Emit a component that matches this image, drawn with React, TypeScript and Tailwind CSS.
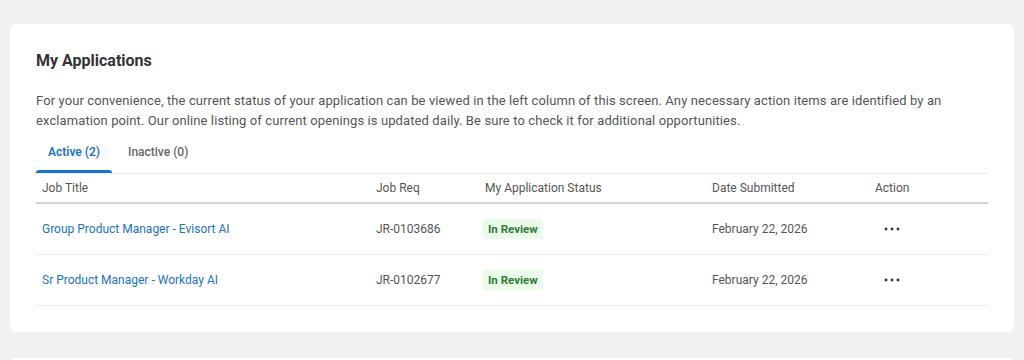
const rows = [
  { title: 'Group Product Manager - Evisort AI', req: 'JR-0103686', status: 'In Review', date: 'February 22, 2026' },
  { title: 'Sr Product Manager - Workday AI', req: 'JR-0102677', status: 'In Review', date: 'February 22, 2026' },
]

const cols = 'grid grid-cols-[334px_109px_227px_163px_119px]'

const Dots = () => (
  <svg width="16" height="6" viewBox="0 0 16 6" className="ml-[9px]">
    <circle cx="2" cy="3" r="1.45" fill="#333" />
    <circle cx="8" cy="3" r="1.45" fill="#333" />
    <circle cx="14" cy="3" r="1.45" fill="#333" />
  </svg>
)

const App = () => {
  return (
    <div className="h-[360px] overflow-hidden bg-[#f0f1f2] px-[10px] pt-[24px] font-['Roboto',sans-serif]">
      <div className="rounded-[6px] bg-white px-[26px] pt-[25px] pb-[26px]">
        <h2 className="text-[16px] leading-[24px] font-bold text-[#333]">My Applications</h2>

        <p className="mt-[18px] text-[13px] leading-[20px] tracking-[0.1px] text-[#555]">
          For your convenience, the current status of your application can be viewed in the left column of this screen. Any necessary action items are identified by an exclamation point. Our online listing of current openings is updated daily. Be sure to check it for additional opportunities.
        </p>

        <div className="flex border-b border-[#eaeaea]">
          <button className="flex w-[76px] flex-col items-center">
            <span className="pt-[13px] pb-[10px] text-[12px] leading-[16px] font-semibold text-[#1a73c8]">Active (2)</span>
            <span className="h-[3px] w-full rounded-t-[3px] bg-[#1a73c8]" />
          </button>
          <button className="flex flex-col items-center px-[16px]">
            <span className="pt-[13px] pb-[10px] text-[12px] leading-[16px] font-medium text-[#666]">Inactive (0)</span>
          </button>
        </div>

        <div className={`${cols} h-[30px] items-center border-b-2 border-[#d4d4d4] text-[12px] text-[#555]`}>
          <div className="pl-[6px]">Job Title</div>
          <div className="pl-[6px]">Job Req</div>
          <div className="pl-[6px]">My Application Status</div>
          <div className="pl-[6px]">Date Submitted</div>
          <div className="pl-[6px]">Action</div>
        </div>

        {rows.map((r) => (
          <div key={r.req} className={`${cols} h-[51px] items-center border-b border-[#ececec] text-[12px] text-[#555]`}>
            <div className="pl-[6px] text-[#1a73c8]">{r.title}</div>
            <div className="pl-[6px]">{r.req}</div>
            <div className="pl-[4px]">
              <span className="rounded-[3px] bg-[#eafbea] px-[5px] py-[3px] text-[11.5px] font-bold text-[#2e7d32]">{r.status}</span>
            </div>
            <div className="pl-[6px]">{r.date}</div>
            <div className="pl-[6px]">
              <Dots />
            </div>
          </div>
        ))}
      </div>
      <div className="mt-[26px] h-[20px] rounded-t-[6px] bg-white" />
    </div>
  )
}

export default App
